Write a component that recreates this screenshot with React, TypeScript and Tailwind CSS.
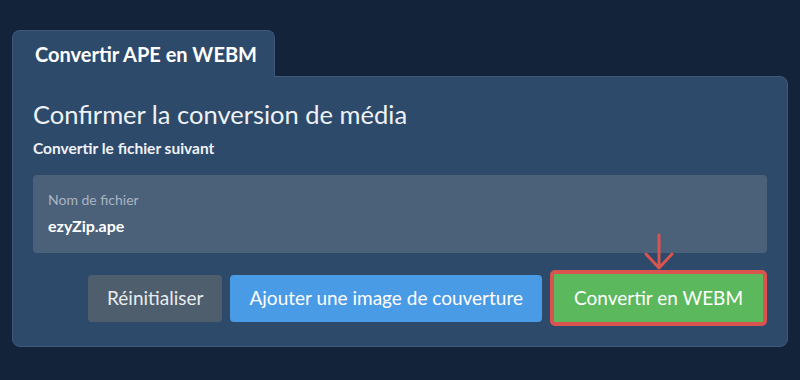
export default function App() {
  return (
    <div className="w-[800px] h-[380px] bg-[#12233a] pt-[30px] px-3 font-['Lato','Liberation_Sans',sans-serif]">
      {/* Tab */}
      <div className="flex">
        <div className="w-[263px] h-[47px] -mb-px rounded-t-lg border border-b-0 border-[#3d5a7a] bg-[#2e4a6b] pl-[22px] pt-[11px] text-[20px] leading-6 font-bold text-white relative z-10">
          Convertir APE en WEBM
        </div>
      </div>
      {/* Panel */}
      <div className="w-[776px] rounded-b-lg rounded-tr-lg border border-[#3d5a7a] bg-[#2e4a6b] px-5 pt-[21px] pb-[20px]">
        <h1 className="text-[25.5px] leading-[32px] text-[#eef2f6]">Confirmer la conversion de média</h1>
        <p className="mt-[8px] text-[15.5px] leading-5 font-bold text-[#eef2f6]">Convertir le fichier suivant</p>
        <div className="mt-[17px] h-[78px] rounded bg-[#4b6079] px-[15px] pt-[17px]">
          <div className="text-[14px] leading-4 text-[#a9b5c2]">Nom de fichier</div>
          <div className="mt-[8px] text-[16px] leading-5 font-bold text-white">ezyZip.ape</div>
        </div>
        <div className="relative mt-[17px] flex justify-end items-center gap-2">
          <button className="h-[47px] px-[19px] rounded bg-[#4f5e6d] text-[19px] text-[#e8ecef]">Réinitialiser</button>
          <button className="h-[47px] px-[19px] rounded bg-[#4a9be6] text-[19px] text-white">Ajouter une image de couverture</button>
          <button className="relative h-[56px] w-[217px] rounded-[5px] border-[4px] border-[#d9534f] bg-[#5cb85c] text-[19px] text-white">
            Convertir en WEBM
            <svg className="absolute left-1/2 -translate-x-1/2 -top-[41px]" width="32" height="38" viewBox="0 0 32 38" fill="none">
              <path d="M16 2v33M3 21l13 14 13-14" stroke="#d9534f" strokeWidth="3" strokeLinecap="round" strokeLinejoin="round" />
            </svg>
          </button>
        </div>
      </div>
    </div>
  );
}
